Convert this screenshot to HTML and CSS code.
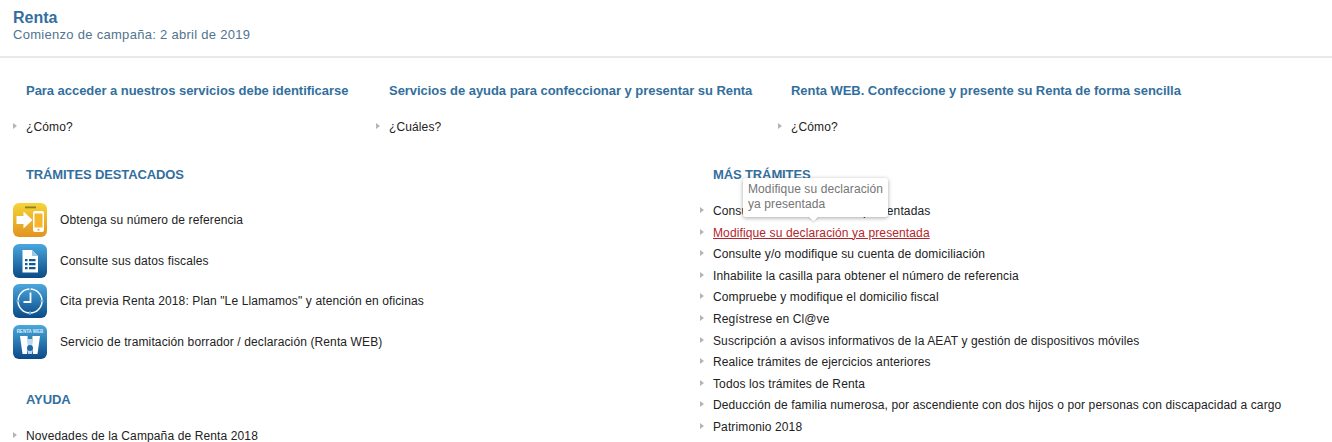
FILE: index.html
```html
<!DOCTYPE html>
<html lang="es">
<head>
  <meta charset="UTF-8">
  <title>Renta</title>
  <link rel="stylesheet" href="styles.css">
</head>
<body>
  <!-- Cabecera -->
  <header class="page-head">
    <h1>Renta</h1>
    <p>Comienzo de campaña: 2 abril de 2019</p>
  </header>

  <!-- Accesos principales -->
  <section class="intro">
    <div class="intro-col col-a">
      <h2>Para acceder a nuestros servicios debe identificarse</h2>
      <a class="arrow-link" href="#">¿Cómo?</a>
    </div>
    <div class="intro-col col-b">
      <h2>Servicios de ayuda para confeccionar y presentar su Renta</h2>
      <a class="arrow-link" href="#">¿Cuáles?</a>
    </div>
    <div class="intro-col col-c">
      <h2>Renta WEB. Confeccione y presente su Renta de forma sencilla</h2>
      <a class="arrow-link" href="#">¿Cómo?</a>
    </div>
  </section>

  <main class="columns">
    <div class="col-left">
      <h3>TRÁMITES DESTACADOS</h3>
      <ul class="featured">
        <li>
          <svg class="app-icon" viewBox="0 0 34 34">
            <defs>
              <linearGradient id="gy" x1="0" y1="0" x2="0" y2="1">
                <stop offset="0" stop-color="#f5d437"/>
                <stop offset="1" stop-color="#e2931f"/>
              </linearGradient>
            </defs>
            <rect width="34" height="34" rx="6" fill="url(#gy)"/>
            <rect x="12" y="3.500" width="11" height="1.800" fill="#8c8226"/>
            <path d="M3.500 13h7V8.500l9 8.500-9 8.500V21h-7z" fill="#fff"/>
            <rect x="20" y="8" width="11" height="21" rx="2" fill="#fff"/>
            <rect x="21.500" y="10.500" width="8" height="14" fill="#f6b72c"/>
            <circle cx="25.500" cy="26.800" r="1" fill="#d9a93a"/>
          </svg>
          <a href="#">Obtenga su número de referencia</a>
        </li>
        <li>
          <svg class="app-icon" viewBox="0 0 34 34">
            <defs>
              <linearGradient id="gb" x1="0" y1="0" x2="0" y2="1">
                <stop offset="0" stop-color="#4aa8de"/>
                <stop offset="1" stop-color="#0a4a86"/>
              </linearGradient>
            </defs>
            <rect width="34" height="34" rx="6" fill="url(#gb)"/>
            <path d="M9.500 6h9.500l6 6v16.500H9.500z" fill="#fff"/>
            <path d="M19 6l6 6h-6z" fill="#9cc6e4"/>
            <path d="M12 15h2.500v2.200H12zM16 15h6.500v2.200H16zM12 19h2.500v2.200H12zM16 19h6.500v2.200H16zM12 23h2.500v2.200H12zM16 23h6.500v2.200H16z" fill="#0f5a96"/>
          </svg>
          <a href="#">Consulte sus datos fiscales</a>
        </li>
        <li>
          <svg class="app-icon" viewBox="0 0 34 34">
            <rect width="34" height="34" rx="6" fill="url(#gb)"/>
            <circle cx="17" cy="17" r="12" fill="none" stroke="#fff" stroke-width="1.400"/>
            <path d="M17 3v3.500M17 27.500V31M3 17h3.500M27.500 17H31" stroke="#2a7ab8" stroke-width="2"/>
            <path d="M17 3.500v3M17 27.500v3M3.500 17h3M27.500 17h3" stroke="#fff" stroke-width="0.800"/>
            <path d="M17.500 8.500V18H10.500" fill="none" stroke="#fff" stroke-width="1.800"/>
          </svg>
          <a href="#">Cita previa Renta 2018: Plan "Le Llamamos" y atención en oficinas</a>
        </li>
        <li>
          <svg class="app-icon" viewBox="0 0 34 34">
            <rect width="34" height="34" rx="6" fill="url(#gb)"/>
            <text class="icon-label" x="17" y="8" text-anchor="middle">RENTA WEB</text>
            <path d="M7 11h7.500l.5 11-1 7H9.500z" fill="#fff"/>
            <path d="M27 11h-7.500l-.5 11 1 7h4.500z" fill="#fff"/>
            <path d="M15 14h4v15h-4z" fill="#bcd8ee"/>
            <circle cx="17" cy="23" r="3" fill="#1f6aa8"/>
          </svg>
          <a href="#">Servicio de tramitación borrador / declaración (Renta WEB)</a>
        </li>
      </ul>
      <h3 class="help-title">AYUDA</h3>
      <a class="arrow-link" href="#">Novedades de la Campaña de Renta 2018</a>
    </div>

    <div class="col-right">
      <h3>MÁS TRÁMITES</h3>
      <ul class="more">
        <li><a class="arrow-link" href="#">Consulte las declaraciones presentadas</a></li>
        <li class="is-hover">
          <a class="arrow-link" href="#">Modifique su declaración ya presentada</a>
          <div class="tooltip">Modifique su declaración<br>ya presentada</div>
        </li>
        <li><a class="arrow-link" href="#">Consulte y/o modifique su cuenta de domiciliación</a></li>
        <li><a class="arrow-link" href="#">Inhabilite la casilla para obtener el número de referencia</a></li>
        <li><a class="arrow-link" href="#">Compruebe y modifique el domicilio fiscal</a></li>
        <li><a class="arrow-link" href="#">Regístrese en Cl@ve</a></li>
        <li><a class="arrow-link" href="#">Suscripción a avisos informativos de la AEAT y gestión de dispositivos móviles</a></li>
        <li><a class="arrow-link" href="#">Realice trámites de ejercicios anteriores</a></li>
        <li><a class="arrow-link" href="#">Todos los trámites de Renta</a></li>
        <li><a class="arrow-link" href="#">Deducción de familia numerosa, por ascendiente con dos hijos o por personas con discapacidad a cargo</a></li>
        <li><a class="arrow-link" href="#">Patrimonio 2018</a></li>
      </ul>
    </div>
  </main>
</body>
</html>
```

FILE: styles.css
```css
/* Global */
* {
  margin: 0;
  padding: 0;
  box-sizing: border-box;
}

html, body {
  height: 442px;
  overflow: hidden;
}

body {
  background-color: #fff;
  color: #222;
  font-family: "Liberation Sans", Arial, sans-serif;
  font-size: 12px;
  line-height: 16px;
  letter-spacing: 0.12px;
}

a {
  color: #222;
  text-decoration: none;
}

ul {
  list-style: none;
}

/* Cabecera */
.page-head {
  height: 58px;
  padding: 9px 13px 0;
  border-bottom: 2px solid #e9e9e9;
}

.page-head h1 {
  color: #336f9e;
  font-size: 16px;
  line-height: 17px;
  letter-spacing: 0;
}

.page-head p {
  color: #51748f;
  font-size: 13px;
  line-height: 17px;
  letter-spacing: 0.29px;
}

/* Accesos principales */
.intro {
  display: flex;
  padding: 25px 0 0 13px;
}

.intro-col {
  flex: none;
}

.col-a { width: 363px; }
.col-b { width: 402px; }

.intro-col h2 {
  margin-bottom: 20px;
  padding-left: 13px;
  color: #336f9e;
  font-size: 13px;
  line-height: 16px;
  letter-spacing: -0.04px;
}

/* Enlace con flecha */
.arrow-link {
  display: block;
  position: relative;
  padding-left: 13px;
}

.arrow-link::before {
  content: "";
  position: absolute;
  left: 0;
  top: 4px;
  border-left: 4px solid #b5b5b5;
  border-top: 3.5px solid transparent;
  border-bottom: 3.5px solid transparent;
}

/* Columnas */
.columns {
  display: flex;
  padding: 32px 0 0 13px;
}

.col-left {
  width: 687px;
  flex: none;
}

.col-right {
  flex: 1;
}

.columns h3 {
  padding-left: 13px;
  color: #336f9e;
  font-size: 13px;
  line-height: 16px;
  letter-spacing: -0.12px;
}

/* Destacados */
.featured {
  display: flex;
  flex-direction: column;
  gap: 6.5px;
  margin-top: 20px;
}

.featured li {
  display: flex;
  align-items: center;
  gap: 13px;
}

.app-icon {
  width: 34px;
  height: 34px;
  flex: none;
}

.icon-label {
  fill: #dcecf8;
  font-size: 4.5px;
  font-weight: bold;
  letter-spacing: 0;
}

.help-title {
  margin-top: 33px;
  margin-bottom: 20px;
}

/* Mas tramites */
.more {
  margin-top: 20px;
}

.more li {
  position: relative;
  height: 21.6px;
  line-height: 16px;
}

.is-hover .arrow-link {
  color: #b3262b;
  text-decoration: underline;
}

/* Tooltip */
.tooltip {
  position: absolute;
  left: 43px;
  bottom: 29px;
  width: 145px;
  height: 39px;
  padding: 4px 5px;
  background: #fff;
  border-radius: 3px;
  box-shadow: 0 1px 4px rgba(0, 0, 0, 0.35);
  color: #757575;
  font-size: 12px;
  line-height: 15px;
  letter-spacing: 0.1px;
  white-space: nowrap;
}

.tooltip::after {
  content: "";
  position: absolute;
  left: 67px;
  bottom: -3px;
  width: 7px;
  height: 7px;
  background: #fff;
  transform: rotate(45deg);
  box-shadow: 1px 1px 2px rgba(0, 0, 0, 0.15);
}
```
